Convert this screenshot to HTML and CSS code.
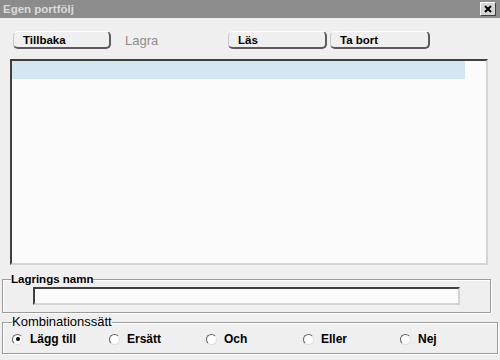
FILE: index.html
```html
<!DOCTYPE html>
<html lang="sv">
<head>
    <meta charset="UTF-8">
    <title>Egen portfölj</title>
    <link rel="stylesheet" href="styles.css">
</head>
<body>
    <div class="window">
        <div class="titlebar">
            <span class="title">Egen portfölj</span>
            <span class="close-btn">
                <svg width="8" height="8" viewBox="0 0 8 8">
                    <path d="M1 1 L7 7 M7 1 L1 7" stroke="#000" stroke-width="2"/>
                </svg>
            </span>
        </div>

        <div class="toolbar">
            <button class="btn btn-back">Tillbaka</button>
            <span class="btn-disabled">Lagra</span>
            <button class="btn btn-read">Läs</button>
            <button class="btn btn-delete">Ta bort</button>
        </div>

        <div class="listbox">
            <div class="list-row selected"></div>
        </div>

        <fieldset class="group name-group">
            <legend>Lagrings namn</legend>
            <input type="text" class="name-input">
        </fieldset>

        <fieldset class="group combo-group">
            <legend>Kombinationssätt</legend>
            <div class="radio-row">
                <label class="radio-item"><span class="radio checked"></span>Lägg till</label>
                <label class="radio-item"><span class="radio"></span>Ersätt</label>
                <label class="radio-item"><span class="radio"></span>Och</label>
                <label class="radio-item"><span class="radio"></span>Eller</label>
                <label class="radio-item"><span class="radio"></span>Nej</label>
            </div>
        </fieldset>
    </div>
</body>
</html>
```

FILE: styles.css
```css
body {
    margin: 0;
    font-family: 'Liberation Sans', Arial, sans-serif;
    background-color: #efefef;
    color: #000;
}

.window {
    width: 500px;
    height: 360px;
    background-color: #efefef;
    overflow: hidden;
}

/* Title bar */
.titlebar {
    height: 18px;
    background-color: #8c8c8c;
    display: flex;
    align-items: center;
    justify-content: space-between;
    padding: 0 4px 0 3px;
}

.title {
    color: #dadada;
    font-size: 11.5px;
    font-weight: bold;
}

.close-btn {
    width: 14px;
    height: 12px;
    background-color: #d6d6d6;
    border: 1px solid;
    border-color: #fff #404040 #404040 #fff;
    display: flex;
    align-items: center;
    justify-content: center;
}

/* Buttons */
.toolbar {
    display: flex;
    align-items: center;
    padding: 13px 0 0 13px;
}

.btn {
    height: 18px;
    padding: 0 0 0 9px;
    background-color: #efefef;
    border: 1px solid;
    border-width: 1px 2px 2px 1px;
    border-color: #fff #5a5a5a #5a5a5a #c8c8c8;
    border-radius: 5px;
    font-family: inherit;
    font-size: 11.5px;
    font-weight: bold;
    text-align: left;
    color: #000;
    box-sizing: border-box;
}

.btn-back {
    width: 98px;
}

.btn-disabled {
    width: 103px;
    margin-left: 14px;
    color: #8c8c8c;
    font-size: 13px;
}

.btn-read {
    width: 99px;
}

.btn-delete {
    width: 100px;
    margin-left: 3px;
}

/* List */
.listbox {
    width: 478px;
    height: 206px;
    margin: 10px 0 0 10px;
    box-sizing: border-box;
    background-color: #fbfbfb;
    border: 2px solid;
    border-color: #404040 #d4d4d4 #d4d4d4 #404040;
}

.list-row {
    height: 18px;
    width: 453px;
}

.list-row.selected {
    background-color: #d4e6f2;
}

/* Group boxes */
.group {
    width: 489px;
    margin: 8px 0 0 2px;
    padding: 0;
    box-sizing: border-box;
    border: 1px solid #9c9c9c;
    box-shadow: 1px 1px 0 #fff, inset 1px 1px 0 #fff;
}

.group legend {
    margin-left: 8px;
    padding: 0;
    font-size: 11.5px;
    font-weight: bold;
    line-height: 12px;
}

.name-group {
    padding-bottom: 7px;
}

.name-input {
    display: block;
    width: 427px;
    height: 18px;
    margin: 2px 0 0 30px;
    box-sizing: border-box;
    background-color: #fbfbfb;
    border: 2px solid;
    border-color: #404040 #d4d4d4 #d4d4d4 #404040;
}

.combo-group {
    margin-top: 2px;
    padding-bottom: 4px;
}

.combo-group legend {
    margin-left: 9px;
    font-size: 13px;
    font-weight: normal;
    line-height: 14px;
}

.radio-row {
    display: flex;
    height: 20px;
    align-items: center;
    padding-left: 9px;
}

.radio-item {
    width: 97px;
    display: flex;
    align-items: center;
    font-size: 12px;
    font-weight: bold;
}

.radio {
    width: 11px;
    height: 11px;
    margin-right: 7px;
    box-sizing: border-box;
    border-radius: 50%;
    background-color: #fff;
    border: 1px solid;
    border-color: #606060 #e0e0e0 #e0e0e0 #606060;
    position: relative;
}

.radio.checked::after {
    content: '';
    position: absolute;
    left: 2.5px;
    top: 2.5px;
    width: 4px;
    height: 4px;
    border-radius: 50%;
    background-color: #000;
}
```
